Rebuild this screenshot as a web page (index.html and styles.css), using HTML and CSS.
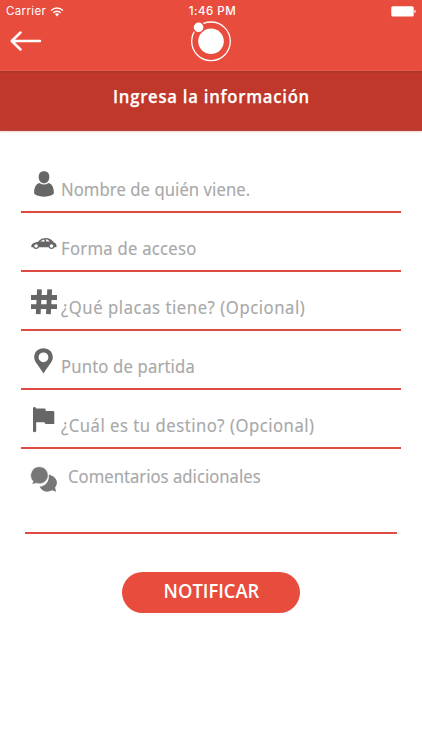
FILE: index.html
```html
<!DOCTYPE html>
<html lang="es">
<head>
<meta charset="utf-8">
<title>Ingresa la información</title>
<link rel="stylesheet" href="styles.css">
</head>
<body>
<header class="top">
  <div class="status">
    <div class="carrier"><span>Carrier</span>
      <svg width="14" height="10" viewBox="0 0 14 10"><g fill="none" stroke="#fff" stroke-width="1.5"><path d="M1 3.5Q7-1.5 13 3.5"/><path d="M3.2 5.8Q7 2.6 10.8 5.8"/></g><path d="M4.8 7.1Q7 5.4 9.2 7.1L7 9.4Z" fill="#fff"/></svg>
    </div>
    <span class="time">1:46 PM</span>
    <svg class="battery" width="25" height="11" viewBox="0 0 25 11"><rect x=".3" y=".3" width="22.4" height="10.2" rx="1.5" fill="#fff"/><path d="M23.4 3.8Q24.7 4 24.7 5.4T23.4 7Z" fill="#fff"/></svg>
  </div>
  <nav class="nav">
    <svg width="32" height="22" viewBox="0 0 32 22" fill="none" stroke="#fff" stroke-width="2.5" stroke-linecap="round" stroke-linejoin="round"><path d="M30 10H2M10.5 1.5L1.8 10L10.5 18.5"/></svg>
    <svg class="logo" width="42" height="42" viewBox="0 0 42 42"><circle cx="21" cy="20.3" r="19.3" fill="none" stroke="#fff" stroke-width="1.3"/><circle cx="21" cy="20.3" r="12.8" fill="#fff"/><circle cx="8.6" cy="6.3" r="6.1" fill="#e84c3d"/><circle cx="8.6" cy="6.3" r="4.8" fill="#fff"/></svg>
  </nav>
</header>
<div class="banner"><h1 class="title">Ingresa la información</h1></div>
<main class="form">
  <div class="field">
    <svg class="icon" viewBox="0 0 28 28"><path d="M14 1.2C10.5 1.2 8.7 3.3 8.7 6.7C8.7 10.8 10.8 13.2 14 13.2S19.3 10.8 19.3 6.7C19.3 3.3 17.5 1.2 14 1.2Z"/><path d="M9.5 13Q14 16 18.5 13C22 13.9 23.6 16.8 23.9 22.5Q24 24 22.8 24.6C18 27.4 10 27.4 5.2 24.6Q4 24 4.1 22.5C4.4 16.8 6 13.9 9.5 13Z"/></svg>
    <span class="label">Nombre de quién viene.</span>
  </div>
  <div class="field">
    <svg class="icon car" viewBox="0 0 28 28"><path d="M1.4 17.2Q.8 14.3 3.8 13Q6 12.1 8 11.7C10.5 9 13 8 16.5 8C20 8 22.5 10.5 24 12.6C26.5 13.4 26.8 15.4 26.4 17.2Z"/><circle cx="6.1" cy="16" r="2.9"/><circle cx="6.1" cy="16" r="1.8" fill="#fff"/><circle cx="21.5" cy="16" r="2.9"/><circle cx="21.5" cy="16" r="1.8" fill="#fff"/><path d="M10.3 11.6Q12 9.7 14.4 9.4L14.7 11.6ZM15.9 9.3Q18.2 9.3 19.6 11.5L16.3 11.6Z" fill="#fff"/></svg>
    <span class="label access">Forma de acceso</span>
  </div>
  <div class="field">
    <svg class="icon" viewBox="0 0 28 28" fill="none"><path class="hash" d="M1 9.5H27M1 18.7H27M9.5 1.3L8.2 26.1M19.7 1.3L18.4 26.1"/></svg>
    <span class="label plates">¿Qué placas tiene? (Opcional)</span>
  </div>
  <div class="field">
    <svg class="icon" viewBox="0 0 28 28"><path fill-rule="evenodd" d="M13.5 1.2C8.1 1.2 4.2 5 4.2 10.2C4.2 15.4 9.5 19.2 13.5 26.5C17.5 19.2 22.8 15.4 22.8 10.2C22.8 5 18.9 1.2 13.5 1.2ZM13.5 5.4A4.9 4.9 0 1 1 13.5 15.2A4.9 4.9 0 1 1 13.5 5.4Z"/></svg>
    <span class="label origin">Punto de partida</span>
  </div>
  <div class="field">
    <svg class="icon" viewBox="0 0 28 28"><path d="M3 1.7Q4.5 .4 6 1.7V2.6H14.5Q15.7 2.6 15.7 4V5H23Q24.3 5 24.3 6.2V17.4Q24.3 18 23 18H15.5L14.4 16.3H6.2V25.3Q4.5 27 3 25.3Z"/></svg>
    <span class="label destination">¿Cuál es tu destino? (Opcional)</span>
  </div>
  <div class="field comments">
    <svg class="icon" viewBox="0 0 28 28"><path fill="#777" d="M18.7 9.5C27.6 11.8 28.5 18.5 25 22.6L26.2 26.8L22 25.3C16.5 28.3 11.5 26 9.5 21.6C15 21.5 19.8 16.5 18.7 9.5Z"/><path d="M9.7 1.8A8.5 8.5 0 1 1 6.5 18.2L1.9 19.3L3.2 16.4A8.6 8.6 0 0 1 9.7 1.8Z" fill="#777" stroke="#fff" stroke-width=".5"/></svg>
    <span class="label">Comentarios adicionales</span>
  </div>
  <button class="notify"><span>NOTIFICAR</span></button>
</main>
</body>
</html>
```
FILE: styles.css
```css
* { box-sizing: border-box; }
body { margin: 0; min-height: 750px; background: #fff; font-family: "Noto Sans", sans-serif; }
svg { display: block; }
.top { height: 71px; background: #e84c3d; color: #fff; }
.status { display: grid; grid-template-columns: 1fr auto 1fr; height: 21px; padding: 1px 6px 0; align-items: center; font: 11.5px/21px Inter, sans-serif; }
.carrier { display: flex; gap: 4px; align-items: center; letter-spacing: .35px; }
.time { font-weight: 500; font-size: 11.5px; letter-spacing: .5px; padding-left: 3px; }
.battery { justify-self: end; }
.nav { display: grid; grid-template-columns: 1fr 42px 1fr; height: 40px; padding: 0 10px; align-items: center; }
.banner { height: 60px; background: linear-gradient(#a93529, #c0382b 3px, #c0382b 58px, #b5473d); display: flex; justify-content: center; box-shadow: 0 1px 2px #f5cfcb; }
.title { margin: 9px 0 0; color: #fff; font: 600 18.5px/32px "Open Sans", sans-serif; letter-spacing: .85px; white-space: nowrap; transform: scaleX(.9); -webkit-text-stroke: .25px #fff; }
.form { display: flex; flex-direction: column; padding: 23px 21px 0; }
.field { display: flex; height: 59px; padding: 15px 0 0 9px; border-bottom: 2px solid #dc4c40; gap: 3px; }
.icon { width: 28px; height: 28px; fill: #666; flex: none; margin-top: 1px; }
.hash { stroke: #666; stroke-width: 4.8px; }
.car { margin-top: 2px; }
.label { color: #a8a8a8; font-size: 18.5px; line-height: 40px; white-space: nowrap; transform: scaleX(.9); transform-origin: left; height: 40px; letter-spacing: .07px; -webkit-text-stroke: .12px #a8a8a8; }
.access { letter-spacing: .3px; }
.plates { letter-spacing: .62px; }
.origin { letter-spacing: .18px; }
.destination { letter-spacing: .57px; }
.comments { height: 85px; margin: 0 4px; padding: 15px 0 0 5px; gap: 10px; }
.comments .label { line-height: 24px; height: 24px; letter-spacing: .02px; }
.notify { width: 178px; height: 41px; margin: 38px auto 0; border: 0; border-radius: 21px; padding: 0 0 4px; background: #e84c3d; color: #fff; font: 600 20.5px/37px "Open Sans", sans-serif; }
.notify span { display: inline-block; transform: scaleX(.895); white-space: nowrap; }
```
